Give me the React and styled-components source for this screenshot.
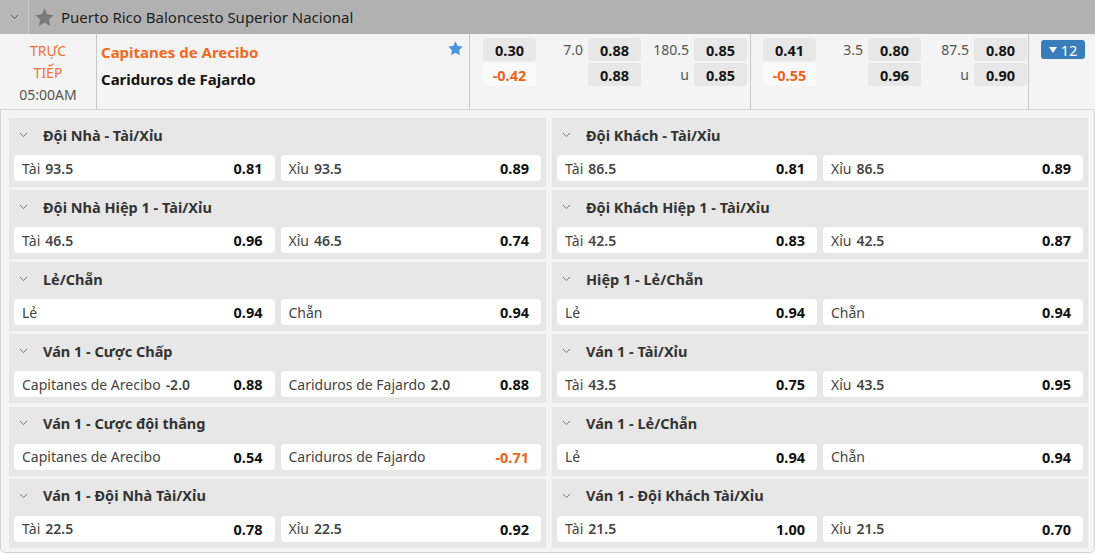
import React from 'react';
import styled, { createGlobalStyle } from 'styled-components';

const Global = createGlobalStyle`
    body {
        margin: 0;
        background: #fff;
        font-family: "Noto Sans", "Open Sans", sans-serif;
        color: #222;
    }
`;

const Wrap = styled.div`
    width: 1095px;
    height: 555px;
    overflow: hidden;
`;

const LeagueBar = styled.div`
    display: flex;
    align-items: center;
    height: 34px;
    background: #b1b1b1;
`;

const CollapseBox = styled.div`
    width: 28px;
    height: 34px;
    display: flex;
    align-items: center;
    justify-content: center;
    background: #b8b8b8;
    border-right: 1px solid #c9c9c9;
`;

const LeagueName = styled.div`
    display: flex;
    align-items: center;
    gap: 6px;
    padding-left: 5px;
    font-size: 15px;
    color: #1e1e1e;
`;

const MatchRow = styled.div`
    display: flex;
    height: 76px;
    background: #f4f4f4;
    border-bottom: 1px solid #d6d6d6;
    box-sizing: border-box;
`;

const TimeCol = styled.div`
    width: 96px;
    border-right: 1px solid #c8c8c8;
    display: flex;
    flex-direction: column;
    align-items: center;
    padding-top: 6px;
    font-size: 14px;
    line-height: 22px;
`;

const Live = styled.span`
    color: #f07238;
`;

const Clock = styled.span`
    color: #555;
`;

const TeamsCol = styled.div`
    width: 373px;
    border-right: 1px solid #c8c8c8;
    padding: 5px 8px 0 4px;
    box-sizing: border-box;
    position: relative;
`;

const Team = styled.div`
    font-size: 15px;
    font-weight: 700;
    line-height: 27px;
    color: ${(p) => (p.$home ? '#f2691f' : '#141414')};
`;

const FavStar = styled.div`
    position: absolute;
    right: 5px;
    top: 6px;
`;

const OddsBlock = styled.div`
    width: ${(p) => p.$w}px;
    border-right: 1px solid #c8c8c8;
    padding: 4px 0 0 ${(p) => p.$pl}px;
    box-sizing: border-box;
    display: grid;
    grid-template-columns: 53px 52px 53px 53px 53px;
    grid-template-rows: 23px 23px;
    row-gap: 2px;
    align-content: start;
`;

const OddCell = styled.div`
    display: flex;
    align-items: center;
    justify-content: center;
    border-radius: 3px;
    font-size: 14.5px;
    font-weight: 700;
    background: ${(p) => (p.$neg ? '#fafafa' : '#e7e7e7')};
    color: ${(p) => (p.$neg ? '#f0621c' : '#151515')};
`;

const Line = styled.div`
    display: flex;
    align-items: center;
    justify-content: flex-end;
    padding-right: 5px;
    font-size: 14px;
    color: #555;
`;

const MoreCol = styled.div`
    flex: 1;
    padding: 6px 0 0 12px;
`;

const MoreBtn = styled.div`
    width: 44px;
    height: 19px;
    background: #3a7dbd;
    border-radius: 3px;
    color: #fff;
    font-size: 14.5px;
    display: flex;
    align-items: center;
    justify-content: center;
    gap: 4px;
`;

const Markets = styled.div`
    display: grid;
    grid-template-columns: 537px 536px;
    column-gap: 6px;
    row-gap: 3px;
    padding: 8px 7px 4px 8px;
    background: #f4f4f4;
    border: 1px solid #d3d3d3;
    border-top: none;
    border-radius: 0 0 5px 5px;
    height: 443px;
    box-sizing: border-box;
`;

const Market = styled.div`
    background: #e7e7e7;
    padding: 0 5px 6px;
    height: 69px;
    box-sizing: border-box;
`;

const MarketHead = styled.div`
    display: flex;
    align-items: center;
    height: 37px;
    padding: 0 0 4px 5px;
    box-sizing: border-box;
    gap: 15px;
    font-size: 14.5px;
    font-weight: 700;
    color: #333;
`;

const Picks = styled.div`
    display: grid;
    grid-template-columns: 1fr 1fr;
    gap: 6px;
`;

const Pick = styled.div`
    height: 26px;
    background: #fff;
    border-radius: 4px;
    display: flex;
    align-items: center;
    justify-content: space-between;
    padding: 0 12px 0 8px;
    font-size: 14px;
`;

const PickName = styled.span`
    color: #444;
`;

const PickLine = styled.span`
    color: #444;
    font-weight: 600;
    margin-left: 5px;
`;

const PickOdd = styled.span`
    font-weight: 700;
    font-size: 14.5px;
    color: ${(p) => (p.$neg ? '#f0621c' : '#111')};
`;

const Chevron = ({ color = '#777', size = 9 }) => (
    <svg width={size} height={size * 0.6} viewBox="0 0 10 6">
        <path d="M1 1 L5 5 L9 1" fill="none" stroke={color} strokeWidth="1.1" />
    </svg>
);

const Star = ({ color, size }) => (
    <svg width={size} height={size} viewBox="0 0 24 24">
        <path
            d="M12 1.8l3.1 6.6 7.2.9-5.3 5 1.4 7.1L12 17.9l-6.4 3.5L7 14.3l-5.3-5 7.2-.9z"
            fill={color}
        />
    </svg>
);

const markets = [
    ['Đội Nhà - Tài/Xỉu', ['Tài', '93.5', '0.81'], ['Xỉu', '93.5', '0.89']],
    ['Đội Khách - Tài/Xỉu', ['Tài', '86.5', '0.81'], ['Xỉu', '86.5', '0.89']],
    ['Đội Nhà Hiệp 1 - Tài/Xỉu', ['Tài', '46.5', '0.96'], ['Xỉu', '46.5', '0.74']],
    ['Đội Khách Hiệp 1 - Tài/Xỉu', ['Tài', '42.5', '0.83'], ['Xỉu', '42.5', '0.87']],
    ['Lẻ/Chẵn', ['Lẻ', '', '0.94'], ['Chẵn', '', '0.94']],
    ['Hiệp 1 - Lẻ/Chẵn', ['Lẻ', '', '0.94'], ['Chẵn', '', '0.94']],
    ['Ván 1 - Cược Chấp', ['Capitanes de Arecibo', '-2.0', '0.88'], ['Cariduros de Fajardo', '2.0', '0.88']],
    ['Ván 1 - Tài/Xỉu', ['Tài', '43.5', '0.75'], ['Xỉu', '43.5', '0.95']],
    ['Ván 1 - Cược đội thắng', ['Capitanes de Arecibo', '', '0.54'], ['Cariduros de Fajardo', '', '-0.71']],
    ['Ván 1 - Lẻ/Chẵn', ['Lẻ', '', '0.94'], ['Chẵn', '', '0.94']],
    ['Ván 1 - Đội Nhà Tài/Xỉu', ['Tài', '22.5', '0.78'], ['Xỉu', '22.5', '0.92']],
    ['Ván 1 - Đội Khách Tài/Xỉu', ['Tài', '21.5', '1.00'], ['Xỉu', '21.5', '0.70']],
];

const PickCell = ({ pick }) => (
    <Pick>
        <span>
            <PickName>{pick[0]}</PickName>
            {pick[1] && <PickLine>{pick[1]}</PickLine>}
        </span>
        <PickOdd $neg={pick[2].startsWith('-')}>{pick[2]}</PickOdd>
    </Pick>
);

const Block = ({ w, pl, rows }) => (
    <OddsBlock $w={w} $pl={pl}>
        {rows.map((r) =>
            r.map((v, i) =>
                i % 2 === 0 ? (
                    <OddCell key={i} $neg={v.startsWith('-')}>{v}</OddCell>
                ) : (
                    <Line key={i}>{v}</Line>
                )
            )
        )}
    </OddsBlock>
);

const App = () => (
    <Wrap>
        <Global />
        <LeagueBar>
            <CollapseBox>
                <Chevron color="#555" size={9} />
            </CollapseBox>
            <LeagueName>
                <Star color="#7a7a7a" size={21} />
                Puerto Rico Baloncesto Superior Nacional
            </LeagueName>
        </LeagueBar>
        <MatchRow>
            <TimeCol>
                <Live>TRỰC</Live>
                <Live>TIẾP</Live>
                <Clock>05:00AM</Clock>
            </TimeCol>
            <TeamsCol>
                <Team $home>Capitanes de Arecibo</Team>
                <Team>Cariduros de Fajardo</Team>
                <FavStar>
                    <Star color="#4a94dd" size={17} />
                </FavStar>
            </TeamsCol>
            <Block
                w={281}
                pl={13}
                rows={[
                    ['0.30', '7.0', '0.88', '180.5', '0.85'],
                    ['-0.42', '', '0.88', 'u', '0.85'],
                ]}
            />
            <Block
                w={278}
                pl={12}
                rows={[
                    ['0.41', '3.5', '0.80', '87.5', '0.80'],
                    ['-0.55', '', '0.96', 'u', '0.90'],
                ]}
            />
            <MoreCol>
                <MoreBtn>
                    <svg width="8" height="6" viewBox="0 0 8 6">
                        <path d="M0 0 H8 L4 6 Z" fill="#fff" />
                    </svg>
                    12
                </MoreBtn>
            </MoreCol>
        </MatchRow>
        <Markets>
            {markets.map(([title, a, b]) => (
                <Market key={title}>
                    <MarketHead>
                        <Chevron />
                        {title}
                    </MarketHead>
                    <Picks>
                        <PickCell pick={a} />
                        <PickCell pick={b} />
                    </Picks>
                </Market>
            ))}
        </Markets>
    </Wrap>
);

export default App;
